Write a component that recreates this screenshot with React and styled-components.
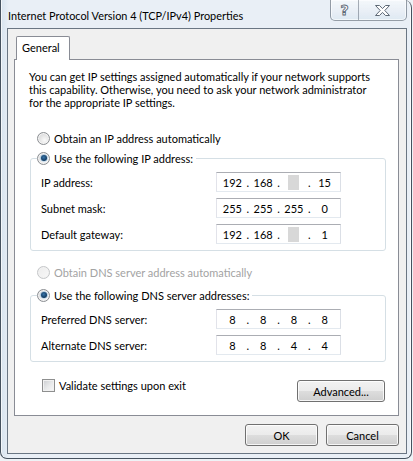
import React from "react";
import styled, { createGlobalStyle } from "styled-components";

const Global = createGlobalStyle`
  html, body { margin: 0; padding: 0; background: #eef2f6; }
  body { font-family: Lato, "Noto Sans", sans-serif; font-size: 11px; color: #000; }
  * { box-sizing: border-box; }
`;

const Window = styled.div`
  width: 412px;
  height: 459px;
  display: flex;
  flex-direction: column;
  padding: 0 4px 4px 6px;
  border: 1px solid #46525f;
  border-top: none;
  border-radius: 0 8px 7px 7px;
  background: linear-gradient(90deg, #d7e3ee 0px, #e9eff6 8px, #e9eff6 100%);
  box-shadow: inset 1px 0 0 rgba(255,255,255,0.7), inset -1px 0 0 rgba(255,255,255,0.7);
`;

const TitleBar = styled.div`
  height: 28px;
  display: flex;
  align-items: flex-start;
  justify-content: space-between;
`;

const Title = styled.div`
  padding: 9px 0 0 1px;
  font-size: 10.9px;
  line-height: 14px;
  color: #000;
`;

const Caption = styled.div`
  display: flex;
  height: 21px;
  border: 1px solid rgba(70, 82, 98, 0.55);
  border-top: none;
  border-radius: 0 0 5px 5px;
  background: linear-gradient(180deg, rgba(255,255,255,0.55), rgba(215,228,240,0.6));
  box-shadow: inset 0 0 0 1px rgba(255,255,255,0.6);
  overflow: hidden;
`;

const CapButton = styled.div`
  width: ${p => p.w}px;
  display: flex;
  align-items: center;
  justify-content: center;
  border-left: ${p => (p.divider ? "1px solid rgba(70,82,98,0.45)" : "none")};
`;

const HelpGlyph = styled.span`
  font-family: "DejaVu Sans", sans-serif;
  font-weight: bold;
  font-size: 14px;
  line-height: 14px;
  color: #ffffff;
  -webkit-text-stroke: 0.9px #5d6875;
`;

const Client = styled.div`
  flex: 1;
  display: flex;
  flex-direction: column;
  border: 1px solid #6a7683;
  background: #f0f0f0;
  padding: 7px 7px 7px 6px;
`;

const TabStrip = styled.div`
  display: flex;
  padding-left: 2px;
  position: relative;
  z-index: 1;
  margin-bottom: -1px;
`;

const Tab = styled.div`
  height: 24px;
  padding: 4px 9px 0 5px;
  line-height: 14px;
  border: 1px solid #898c95;
  border-bottom: none;
  border-radius: 2px 2px 0 0;
  background: #fff;
`;

const Panel = styled.div`
  height: 357px;
  border: 1px solid #898c95;
  background: #fff;
  display: flex;
  flex-direction: column;
`;

const Intro = styled.p`
  margin: 10px 0 0 14px;
  line-height: 13px;
`;

const RadioRow = styled.label`
  display: flex;
  align-items: center;
  gap: 4px;
  height: 16px;
  margin: ${p => p.m};
  color: ${p => (p.disabled ? "#a3a3a3" : "#000")};
`;

const Radio = styled.span`
  position: relative;
  width: 13px;
  height: 13px;
  flex: none;
  border-radius: 50%;
  border: 1px solid ${p => (p.disabled ? "#c4c6c8" : "#8b8e92")};
  background: ${p =>
    p.disabled
      ? "linear-gradient(135deg, #ececec, #f8f8f8)"
      : "radial-gradient(circle at 60% 65%, #fafafa 0%, #e6e6e6 45%, #cfd1d4 100%)"};
  box-shadow: inset 0 0 0 1px ${p => (p.disabled ? "#f2f2f2" : "#f4f4f4")};
  &::after {
    content: "";
    display: ${p => (p.checked ? "block" : "none")};
    position: absolute;
    left: 2.5px;
    top: 2.5px;
    width: 6px;
    height: 6px;
    border-radius: 50%;
    background: radial-gradient(circle at 45% 40%, #3a76a8 0%, #1c4d7a 45%, #0e3458 70%, #6fa6d0 100%);
    box-shadow: 0 0 0 0.6px #8cbde3;
  }
`;

const Group = styled.fieldset`
  margin: ${p => p.m} 12px 0 15px;
  padding: 0 0 0 6px;
  min-inline-size: 0;
  border: 1px solid #d5dfe5;
  border-radius: 3px;
`;

const Legend = styled.legend`
  padding: 0 3px 0 0;
`;

const Fields = styled.div`
  display: grid;
  grid-template-columns: 175px 125px;
  row-gap: 6px;
  padding: 6px 44px 6px 4px;
`;

const FieldLabel = styled.span`
  display: flex;
  align-items: center;
  height: 20px;
`;

const IpBox = styled.div`
  display: flex;
  align-items: center;
  height: 20px;
  padding: 0 2px 0 2px;
  border: 1px solid;
  border-color: #abadb3 #dbdfe6 #e3e9ef #e2e3ea;
  background: #fff;
`;

const Octet = styled.span`
  flex: 1;
  display: flex;
  justify-content: center;
  align-items: center;
`;

const Dot = styled.span`
  width: 4px;
  text-align: center;
`;

const Redacted = styled.span`
  width: 11px;
  height: 15px;
  background: #d8d8d8;
`;

const BottomRow = styled.div`
  display: flex;
  justify-content: space-between;
  align-items: flex-start;
  margin: 17px 13px 0 27px;
`;

const CheckRow = styled.label`
  display: flex;
  align-items: center;
  gap: 4px;
  height: 13px;
  line-height: 13px;
`;

const Check = styled.span`
  width: 13px;
  height: 13px;
  border: 1px solid #8e8f8f;
  background: linear-gradient(135deg, #cbcdd0 0%, #e9eaeb 55%, #f8f8f8 100%);
  box-shadow: inset 0 0 0 1px #f1f1f1;
`;

const Button = styled.button`
  width: ${p => p.w}px;
  height: 22px;
  margin-top: ${p => p.mt || 0}px;
  padding: 0;
  font-family: Lato, "Noto Sans", sans-serif;
  font-size: 11px;
  color: #000;
  border: 1px solid #707070;
  border-radius: 3px;
  background: linear-gradient(180deg, #f2f2f2 0%, #ebebeb 50%, #dddddd 51%, #cfcfcf 100%);
  box-shadow: inset 0 0 0 1px rgba(255,255,255,0.8);
`;

const Footer = styled.div`
  display: flex;
  justify-content: flex-end;
  gap: 8px;
  margin-top: 8px;
`;

function CloseGlyph() {
  return (
    <svg width="15" height="11" viewBox="0 0 15 11">
      <polygon
        points="0.5,0.5 4.5,0.5 7.5,3.6 10.5,0.5 14.5,0.5 9.8,5.5 14.5,10.5 10.5,10.5 7.5,7.4 4.5,10.5 0.5,10.5 5.2,5.5"
        fill="#ffffff"
        stroke="#5d6875"
        strokeWidth="1"
        strokeLinejoin="round"
      />
    </svg>
  );
}

function Ip({ parts }) {
  return (
    <IpBox>
      {parts.map((p, i) => (
        <React.Fragment key={i}>
          {i > 0 && <Dot>.</Dot>}
          <Octet>{p === null ? <Redacted /> : p}</Octet>
        </React.Fragment>
      ))}
    </IpBox>
  );
}

function FieldRow({ label, parts }) {
  return (
    <>
      <FieldLabel>{label}</FieldLabel>
      <Ip parts={parts} />
    </>
  );
}

export default function App() {
  return (
    <Window>
      <Global />
      <TitleBar>
        <Title>Internet Protocol Version 4 (TCP/IPv4) Properties</Title>
        <Caption>
          <CapButton w={27}>
            <HelpGlyph>?</HelpGlyph>
          </CapButton>
          <CapButton w={48} divider>
            <CloseGlyph />
          </CapButton>
        </Caption>
      </TitleBar>
      <Client>
        <TabStrip>
          <Tab>General</Tab>
        </TabStrip>
        <Panel>
          <Intro>
            You can get IP settings assigned automatically if your network supports
            <br />
            this capability. Otherwise, you need to ask your network administrator
            <br />
            for the appropriate IP settings.
          </Intro>
          <RadioRow m="21px 0 0 22px">
            <Radio />
            Obtain an IP address automatically
          </RadioRow>
          <Group m="4px">
            <Legend>
              <RadioRow m="0">
                <Radio checked />
                Use the following IP address:
              </RadioRow>
            </Legend>
            <Fields>
              <FieldRow label="IP address:" parts={["192", "168", null, "15"]} />
              <FieldRow label="Subnet mask:" parts={["255", "255", "255", "0"]} />
              <FieldRow label="Default gateway:" parts={["192", "168", null, "1"]} />
            </Fields>
          </Group>
          <RadioRow m="13px 0 0 22px" disabled>
            <Radio disabled />
            Obtain DNS server address automatically
          </RadioRow>
          <Group m="7px">
            <Legend>
              <RadioRow m="0">
                <Radio checked />
                Use the following DNS server addresses:
              </RadioRow>
            </Legend>
            <Fields>
              <FieldRow label="Preferred DNS server:" parts={["8", "8", "8", "8"]} />
              <FieldRow label="Alternate DNS server:" parts={["8", "8", "4", "4"]} />
            </Fields>
          </Group>
          <BottomRow>
            <CheckRow>
              <Check />
              Validate settings upon exit
            </CheckRow>
            <Button w={88} mt={1}>Advanced...</Button>
          </BottomRow>
        </Panel>
        <Footer>
          <Button w={73}>OK</Button>
          <Button w={73}>Cancel</Button>
        </Footer>
      </Client>
    </Window>
  );
}
